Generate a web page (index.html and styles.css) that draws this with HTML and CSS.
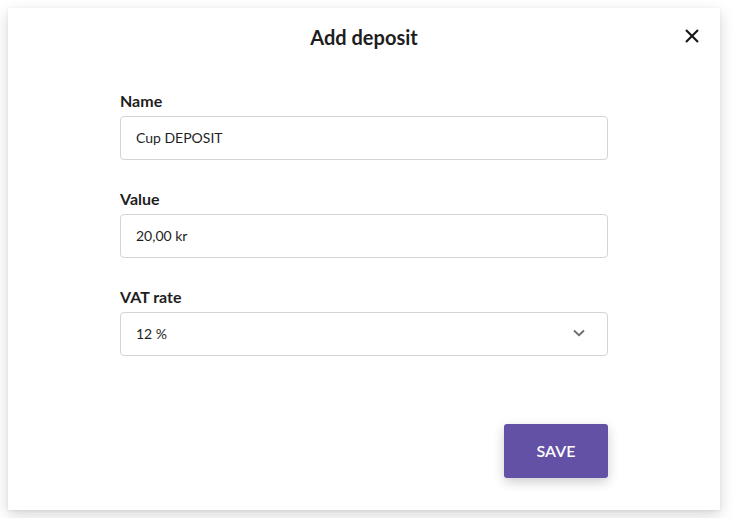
FILE: index.html
```html
<!DOCTYPE html>
<html lang="en">
<head>
<meta charset="utf-8">
<title>Add deposit</title>
<link rel="stylesheet" href="styles.css">
</head>
<body>
<div class="modal">
  <div class="header">
    <h1 class="title">Add deposit</h1>
    <button class="close" aria-label="Close">
      <svg width="14" height="14" viewBox="0 0 14 14"><path d="M1 1L13 13M13 1L1 13" stroke="#1a1a1a" stroke-width="2.2" fill="none"/></svg>
    </button>
  </div>
  <form class="form">
    <div class="field">
      <label class="label">Name</label>
      <div class="input">Cup DEPOSIT</div>
    </div>
    <div class="field">
      <label class="label">Value</label>
      <div class="input">20,00 kr</div>
    </div>
    <div class="field">
      <label class="label">VAT rate</label>
      <div class="input select">
        <span>12 %</span>
        <svg class="chev" width="12" height="8" viewBox="0 0 12 8"><path d="M1 1.5L6 6.2L11 1.5" stroke="#6b6b6b" stroke-width="1.8" fill="none"/></svg>
      </div>
    </div>
    <div class="actions">
      <button type="button" class="save">SAVE</button>
    </div>
  </form>
</div>
</body>
</html>
```
FILE: styles.css
```css
* { box-sizing: border-box; }
html, body { margin: 0; padding: 0; background: #fff; }
body { font-family: Lato, "Open Sans", sans-serif; color: #1e1e1e; }
.modal {
  position: relative;
  margin: 8px;
  width: 712px;
  height: 502px;
  background: #fff;
  box-shadow: 0 5px 14px rgba(0,0,0,0.16), 0 1px 3px rgba(0,0,0,0.06);
}
.header { padding-top: 17px; text-align: center; }
.title { margin: 0; font-size: 20px; line-height: 24px; font-weight: 700; color: #1e1e1e; }
.close {
  position: absolute; top: 21px; right: 21px;
  width: 14px; height: 14px; padding: 0; border: 0; background: none;
  display: flex; cursor: pointer;
}
.form { margin: 42px 112px 0; display: flex; flex-direction: column; gap: 29px; }
.field { display: flex; flex-direction: column; gap: 5px; }
.label { font-size: 16px; line-height: 20px; font-weight: 700; color: #1e1e1e; }
.input {
  height: 44px; border: 1px solid #d4d4d4; border-radius: 4px;
  padding: 0 16px 2px 15px; display: flex; align-items: center;
  font-size: 14px; color: #1e1e1e;
}
.select { justify-content: space-between; padding-right: 22px; }
.actions { display: flex; justify-content: flex-end; margin-top: 39px; }
.save {
  width: 104px; height: 54px; border: 0; border-radius: 3px;
  background: #6351a6; color: #fff; padding: 0 0 2px;
  font-family: Lato, sans-serif; font-size: 16px; font-weight: 600; letter-spacing: 0.1px;
  box-shadow: 0 4px 12px rgba(0,0,0,0.2);
}
```
